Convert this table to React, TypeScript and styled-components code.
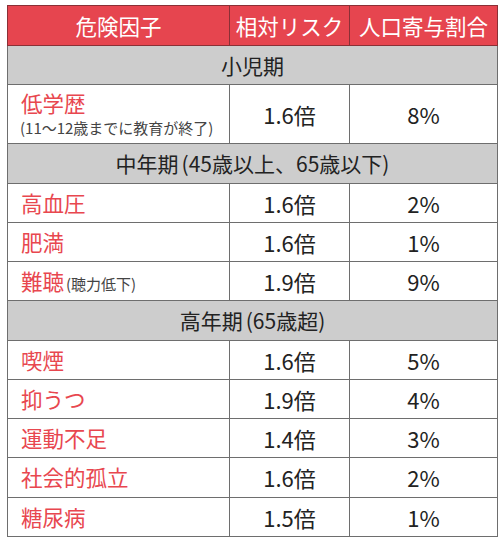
import React from "react";
import styled, { createGlobalStyle } from "styled-components";

const GlobalStyle = createGlobalStyle`
	html, body {
		margin: 0;
		padding: 0;
		background: #fff;
	}
	body {
		font-family: "Noto Sans CJK JP", "Noto Sans", sans-serif;
	}
`;

const Wrapper = styled.div`
	width: 500px;
	height: 546px;
	padding: 5px 6px 0 7px;
	box-sizing: border-box;
`;

const Table = styled.table`
	width: 487px;
	border-collapse: collapse;
	table-layout: fixed;
	border: 1.5px solid #6e6e6e;
`;

const HeadCell = styled.th<{ $w: number }>`
	width: ${(p) => p.$w}px;
	height: 38.5px;
	padding: 0;
	background: #e6454f;
	color: #fff;
	font-weight: 400;
	font-size: 21.5px;
	text-align: center;
	border: 1px solid #8a3036;
	white-space: nowrap;
`;

const SectionCell = styled.td`
	height: 38.25px;
	padding: 0;
	background: #cdcdcd;
	color: #222;
	font-size: 21px;
	text-align: center;
	border: 1px solid #6e6e6e;
`;

const Paren = styled.span<{ $open?: boolean }>`
	margin-left: ${(p) => (p.$open ? "3px" : "0")};
`;

const NameCell = styled.td<{ $tall?: boolean }>`
	height: ${(p) => (p.$tall ? 58.5 : 38.25)}px;
	padding: 0 0 0 13px;
	border: 1px solid #6e6e6e;
	color: #e8474f;
	font-size: 21.5px;
	line-height: 1.2;
	vertical-align: middle;
	white-space: nowrap;
`;

const Note = styled.span<{ $block?: boolean }>`
	display: ${(p) => (p.$block ? "block" : "inline")};
	color: #444;
	font-size: 15px;
	line-height: 1.3;
	margin-left: ${(p) => (p.$block ? "-1px" : "2px")};
	margin-top: ${(p) => (p.$block ? "2px" : "0")};
`;

const ValueCell = styled.td`
	padding: 0;
	border: 1px solid #6e6e6e;
	color: #222;
	font-size: 22px;
	text-align: center;
`;

type Row = { name: string; note?: string; block?: boolean; risk: string; share: string };
type Section = { label: string; range?: string; rows: Row[] };

const sections: Section[] = [
	{
		label: "小児期",
		rows: [{ name: "低学歴", note: "(11〜12歳までに教育が終了)", block: true, risk: "1.6倍", share: "8%" }],
	},
	{
		label: "中年期",
		range: "45歳以上、65歳以下",
		rows: [
			{ name: "高血圧", risk: "1.6倍", share: "2%" },
			{ name: "肥満", risk: "1.6倍", share: "1%" },
			{ name: "難聴", note: "(聴力低下)", risk: "1.9倍", share: "9%" },
		],
	},
	{
		label: "高年期",
		range: "65歳超",
		rows: [
			{ name: "喫煙", risk: "1.6倍", share: "5%" },
			{ name: "抑うつ", risk: "1.9倍", share: "4%" },
			{ name: "運動不足", risk: "1.4倍", share: "3%" },
			{ name: "社会的孤立", risk: "1.6倍", share: "2%" },
			{ name: "糖尿病", risk: "1.5倍", share: "1%" },
		],
	},
];

export default function App() {
	return (
		<Wrapper>
			<GlobalStyle />
			<Table>
				<thead>
					<tr>
						<HeadCell $w={221}>危険因子</HeadCell>
						<HeadCell $w={119}>相対リスク</HeadCell>
						<HeadCell $w={147}>人口寄与割合</HeadCell>
					</tr>
				</thead>
				<tbody>
					{sections.map((s) => (
						<React.Fragment key={s.label}>
							<tr>
								<SectionCell colSpan={3}>
									{s.label}
									{s.range && (
										<>
											<Paren $open>(</Paren>
											{s.range}
											<Paren>)</Paren>
										</>
									)}
								</SectionCell>
							</tr>
							{s.rows.map((r) => (
								<tr key={r.name}>
									<NameCell $tall={r.block}>
										{r.name}
										{r.note && <Note $block={r.block}>{r.note}</Note>}
									</NameCell>
									<ValueCell>{r.risk}</ValueCell>
									<ValueCell>{r.share}</ValueCell>
								</tr>
							))}
						</React.Fragment>
					))}
				</tbody>
			</Table>
		</Wrapper>
	);
}
